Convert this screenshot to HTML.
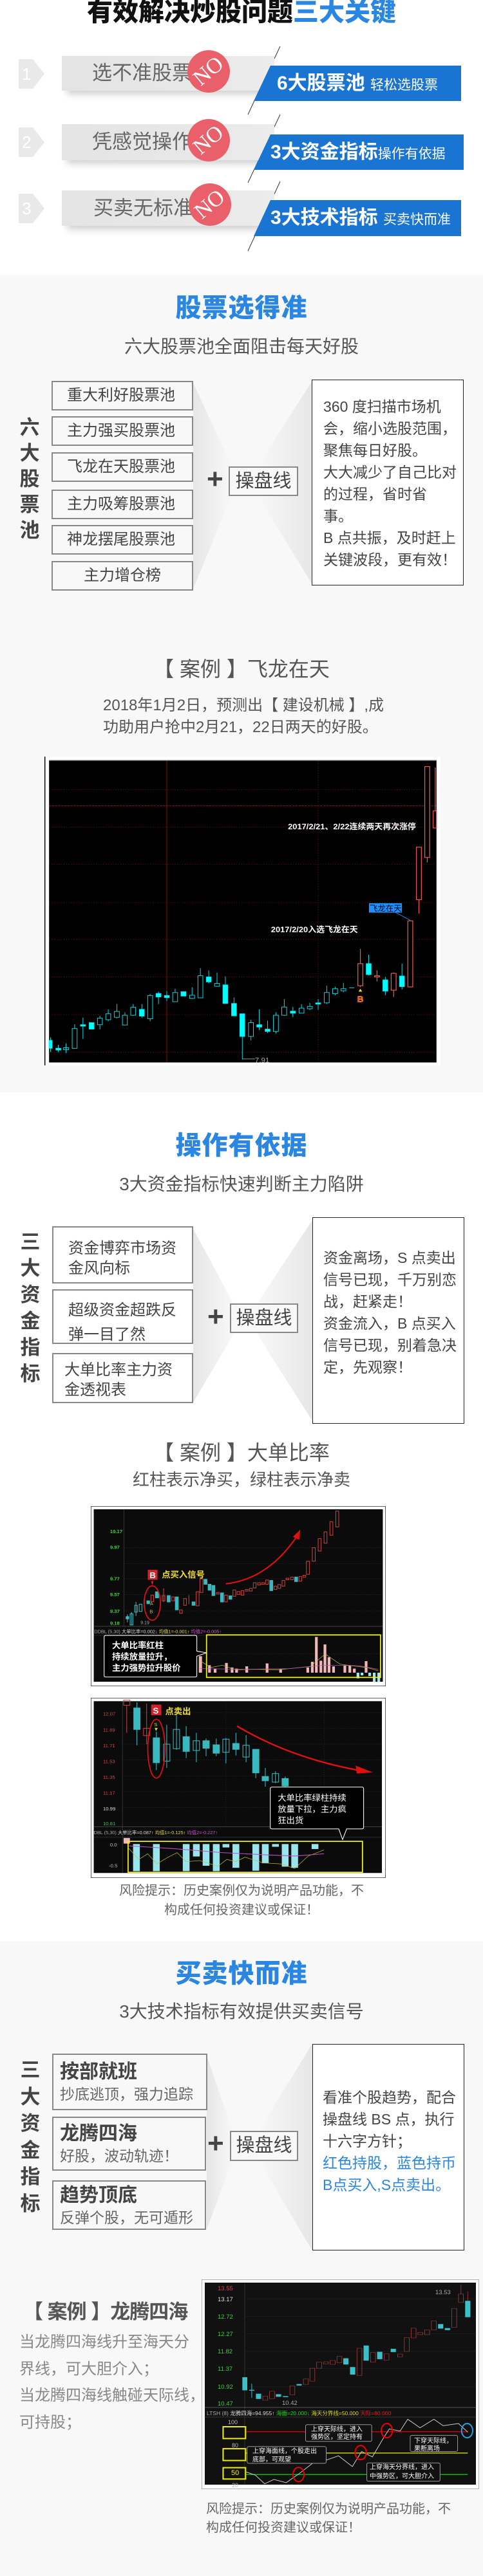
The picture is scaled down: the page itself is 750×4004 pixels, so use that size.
<!DOCTYPE html>
<html><head><meta charset="utf-8">
<style>
*{margin:0;padding:0;box-sizing:border-box}
body{width:750px;height:4004px;position:relative;background:#fff;font-family:"Liberation Sans","Noto Sans CJK SC",sans-serif;color:#555;overflow:hidden}
.a{position:absolute}
.c{text-align:center;left:0;width:750px;white-space:nowrap}
.t1{font-size:40px;font-weight:900;color:#2a86e0;letter-spacing:1px}
.sub{font-size:28px;color:#555}
.gbar{background:linear-gradient(90deg,#e4e4e4,#e8e8e8 70%,#ececec);box-shadow:0 14px 10px -8px rgba(0,0,0,.18)}
.gtx{font-size:31px;color:#666;line-height:54px}
.blue{background:#1a74d2;clip-path:polygon(26px 0,100% 0,100% 100%,0 100%);box-shadow:0 10px 10px -6px rgba(0,0,0,.2);color:#fff;font-size:30px;font-weight:bold;line-height:55px;padding-left:36px;white-space:nowrap}
.blue small{font-size:21px;font-weight:normal}
.no{width:66px;height:66px;border-radius:50%;background:#e9606a;color:#fff;font-family:"Liberation Serif",serif;font-size:34px;line-height:66px;text-align:center;transform:rotate(-40deg)}
.arr{width:40px;height:46px;background:#e9e9e9;clip-path:polygon(0 0,55% 0,100% 50%,55% 100%,0 100%);color:#fff;font-size:26px;line-height:46px;padding-left:5px}
.bx{border:2px solid #888;background:#f8f8f8;font-size:24px;color:#444}
.rb{border:1.5px solid #222;background:#fff;font-size:23px;color:#444;line-height:34px}
.vt{font-size:31px;color:#444;width:34px;text-align:center;line-height:40px;font-weight:bold}
.plus{font-size:44px;color:#444;font-weight:bold}
.cp{border:2px solid #888;background:#f8f8f8;font-size:29px;color:#444;text-align:center}
.case{font-size:32px;color:#555}
.risk{font-size:20px;color:#666}
</style></head><body>

<div class="a c" style="top:-4px;font-size:40px;font-weight:900;color:#111;line-height:46px">有效解决炒股问题<span style="color:#2a86e0">三大关键</span></div>

<svg class="a" style="left:0;top:0" width="750" height="420">
<line x1="435" y1="72" x2="385" y2="178" stroke="#333" stroke-width="1"/>
<line x1="435" y1="178" x2="385" y2="284" stroke="#333" stroke-width="1"/>
<line x1="435" y1="282" x2="385" y2="390" stroke="#333" stroke-width="1"/>
</svg>

<div class="a arr" style="left:29px;top:92px">1</div>
<div class="a arr" style="left:29px;top:198px">2</div>
<div class="a arr" style="left:29px;top:301px">3</div>

<div class="a gbar" style="left:96px;top:87px;width:330px;height:54px"></div>
<div class="a gbar" style="left:96px;top:193px;width:330px;height:56px"></div>
<div class="a gbar" style="left:96px;top:296px;width:330px;height:55px"></div>
<div class="a gtx" style="left:143px;top:87px">选不准股票</div>
<div class="a gtx" style="left:143px;top:194px">凭感觉操作</div>
<div class="a gtx" style="left:145px;top:297px">买卖无标准</div>

<div class="a blue" style="left:394px;top:102px;width:322px;height:55px">6大股票池 <small>轻松选股票</small></div>
<div class="a blue" style="left:394px;top:209px;width:326px;height:55px;padding-left:26px">3大资金指标<small>操作有依据</small></div>
<div class="a blue" style="left:394px;top:311px;width:322px;height:56px;padding-left:26px">3大技术指标 <small>买卖快而准</small></div>

<div class="a no" style="left:291px;top:78px">NO</div>
<div class="a no" style="left:291px;top:185px">NO</div>
<div class="a no" style="left:293px;top:285px">NO</div>

<div class="a" style="left:0;top:427px;width:750px;height:1271px;background:#f8f8f8"></div>
<div class="a c t1" style="top:452px;line-height:54px">股票选得准</div>
<div class="a c sub" style="top:521px;line-height:36px">六大股票池全面阻击每天好股</div>

<svg class="a" style="left:0;top:560px" width="750" height="380">
<defs><linearGradient id="fg" x1="0" x2="1"><stop offset="0" stop-color="#e6e6e6"/><stop offset="1" stop-color="#f8f8f8"/></linearGradient>
<linearGradient id="fg2" x1="1" x2="0"><stop offset="0" stop-color="#e6e6e6"/><stop offset="1" stop-color="#f8f8f8"/></linearGradient></defs>
<polygon points="300,35 360,165 360,210 300,355" fill="url(#fg)"/>
<polygon points="400,165 486,30 486,350 400,210" fill="url(#fg2)"/>
</svg>

<div class="a vt" style="left:29px;top:645px">六<br>大<br>股<br>票<br>池</div>
<div class="a bx" style="left:80px;top:592px;width:220px;height:46px;line-height:42px;padding-left:22px">重大利好股票池</div>
<div class="a bx" style="left:80px;top:647px;width:220px;height:46px;line-height:42px;padding-left:22px">主力强买股票池</div>
<div class="a bx" style="left:80px;top:703px;width:220px;height:46px;line-height:42px;padding-left:22px">飞龙在天股票池</div>
<div class="a bx" style="left:80px;top:761px;width:220px;height:46px;line-height:42px;padding-left:22px">主力吸筹股票池</div>
<div class="a bx" style="left:80px;top:816px;width:220px;height:46px;line-height:42px;padding-left:22px">神龙摆尾股票池</div>
<div class="a bx" style="left:80px;top:872px;width:220px;height:46px;line-height:42px;text-align:center">主力增仓榜</div>
<div class="a plus" style="left:321px;top:720px">+</div>
<div class="a cp" style="left:355px;top:725px;width:108px;height:46px;line-height:42px">操盘线</div>
<div class="a rb" style="left:484px;top:590px;width:236px;height:320px;padding:24px 0 0 17px">360 度扫描市场机<br>会，缩小选股范围，<br>聚焦每日好股。<br>大大减少了自己比对<br>的过程，省时省<br>事。<br>B 点共振，及时赶上<br>关键波段，更有效！</div>

<div class="a c case" style="top:1020px;line-height:40px">【 案例 】飞龙在天</div>
<div class="a" style="left:160px;top:1080px;font-size:24px;color:#555;line-height:34px;white-space:nowrap">2018年1月2日，预测出【 建设机械 】,成<br>功助用户抢中2月21，22日两天的好股。</div>

<svg class="a" style="left:69px;top:1176px" width="615" height="480" viewBox="145 383 1285 1047" preserveAspectRatio="none">
<rect x="145" y="383" width="1285" height="1047" fill="#fff"/>
<rect x="145" y="383" width="3" height="1047" fill="#000"/>
<rect x="160" y="395" width="1257" height="1025" fill="#000"/>
<rect x="160" y="395" width="1257" height="3" fill="#555"/>
<g stroke="#8a1010" stroke-width="2" stroke-dasharray="2 6">
<line x1="160" y1="495" x2="1417" y2="495"/><line x1="160" y1="622" x2="1417" y2="622"/><line x1="160" y1="748" x2="1417" y2="748"/><line x1="160" y1="878" x2="1417" y2="878"/><line x1="160" y1="1003" x2="1417" y2="1003"/><line x1="160" y1="1130" x2="1417" y2="1130"/><line x1="160" y1="1258" x2="1417" y2="1258"/><line x1="160" y1="1385" x2="1417" y2="1385"/><line x1="1033" y1="398" x2="1033" y2="1420"/></g>
<line x1="160" y1="550" x2="1417" y2="550" stroke="#c01010" stroke-width="2" stroke-dasharray="6 4"/>
<line x1="542" y1="398" x2="542" y2="1420" stroke="#8a1010" stroke-width="2"/>
<g stroke="#00e5ee" stroke-width="2" fill="#00ffff">
<line x1="165" y1="1335" x2="165" y2="1385"/><rect x="160" y="1345" width="10" height="27"/>
<line x1="190" y1="1360" x2="190" y2="1385"/><rect x="182" y="1372" width="16" height="6"/>
<line x1="215" y1="1355" x2="215" y2="1388"/><rect x="207" y="1370" width="16" height="7" fill="none"/>
<line x1="243" y1="1290" x2="243" y2="1372"/><rect x="235" y="1305" width="16" height="67" fill="#000"/>
<line x1="270" y1="1268" x2="270" y2="1340"/><rect x="262" y="1292" width="16" height="5"/>
<rect x="290" y="1285" width="16" height="22"/>
<line x1="325" y1="1262" x2="325" y2="1308"/><rect x="317" y="1270" width="16" height="22" fill="#000"/>
<line x1="352" y1="1240" x2="352" y2="1280"/><rect x="344" y="1255" width="16" height="20" fill="#000"/>
<line x1="380" y1="1222" x2="380" y2="1270"/><rect x="372" y="1247" width="16" height="20" fill="#000"/>
<line x1="406" y1="1250" x2="406" y2="1293"/><rect x="398" y="1260" width="16" height="33" fill="#000"/>
<line x1="433" y1="1222" x2="433" y2="1262"/><rect x="425" y="1233" width="16" height="27" fill="#000"/>
<line x1="461" y1="1222" x2="461" y2="1268"/><rect x="453" y="1240" width="16" height="23"/>
<line x1="488" y1="1188" x2="488" y2="1280"/><rect x="480" y="1193" width="16" height="79" fill="#000"/>
<line x1="515" y1="1180" x2="515" y2="1222"/><rect x="507" y="1186" width="16" height="12"/>
<line x1="542" y1="1178" x2="542" y2="1212"/><rect x="534" y="1193" width="16" height="7"/>
<line x1="569" y1="1170" x2="569" y2="1214"/><rect x="561" y="1183" width="16" height="31" fill="#000"/>
<rect x="588" y="1180" width="16" height="15"/>
<line x1="624" y1="1165" x2="624" y2="1205"/><rect x="616" y="1192" width="16" height="11" fill="#000"/>
<line x1="651" y1="1100" x2="651" y2="1201"/><rect x="643" y="1126" width="16" height="75" fill="#000"/>
<line x1="678" y1="1108" x2="678" y2="1152"/><rect x="670" y="1130" width="16" height="17"/>
<line x1="705" y1="1115" x2="705" y2="1162"/><rect x="697" y="1152" width="16" height="10" fill="#000"/>
<line x1="732" y1="1128" x2="732" y2="1220"/><rect x="724" y="1157" width="16" height="63"/>
<line x1="760" y1="1200" x2="760" y2="1262"/><rect x="752" y="1220" width="16" height="42"/>
<line x1="787" y1="1255" x2="787" y2="1410"/><rect x="779" y="1255" width="16" height="77"/>
<line x1="787" y1="1408" x2="828" y2="1408" stroke="#aaa"/>
<line x1="815" y1="1275" x2="815" y2="1345"/><rect x="807" y="1285" width="16" height="47" fill="#000"/>
<line x1="842" y1="1240" x2="842" y2="1310"/><rect x="834" y="1292" width="16" height="8"/>
<line x1="869" y1="1278" x2="869" y2="1320"/><rect x="861" y="1307" width="16" height="8"/>
<line x1="896" y1="1250" x2="896" y2="1322"/><rect x="888" y="1260" width="16" height="55" fill="#000"/>
<line x1="923" y1="1205" x2="923" y2="1262"/><rect x="915" y="1232" width="16" height="28" fill="#000"/>
<line x1="951" y1="1232" x2="951" y2="1266"/><rect x="943" y="1246" width="16" height="7"/>
<line x1="979" y1="1222" x2="979" y2="1253"/><rect x="971" y="1236" width="16" height="17" fill="#000"/>
<line x1="1006" y1="1218" x2="1006" y2="1242"/><rect x="998" y="1230" width="16" height="8" fill="#000"/>
<line x1="1033" y1="1205" x2="1033" y2="1242"/><rect x="1025" y="1218" width="16" height="4"/>
<line x1="1061" y1="1160" x2="1061" y2="1222"/><rect x="1053" y="1183" width="16" height="35" fill="#000"/>
<line x1="1088" y1="1163" x2="1088" y2="1192"/><rect x="1080" y="1170" width="16" height="17" fill="#000"/>
<line x1="1115" y1="1150" x2="1115" y2="1182"/><rect x="1107" y="1170" width="16" height="7" fill="#000"/>
<line x1="1134" y1="1167" x2="1150" y2="1167"/>
<line x1="1197" y1="1055" x2="1197" y2="1125"/><rect x="1189" y="1085" width="16" height="37"/>
<line x1="1251" y1="1130" x2="1251" y2="1192"/><rect x="1243" y="1140" width="16" height="38"/>
<line x1="1305" y1="1085" x2="1305" y2="1172"/><rect x="1297" y="1127" width="16" height="36"/>
</g>
<g stroke="#ff5555" stroke-width="2.5" fill="#000">
<line x1="1170" y1="1035" x2="1170" y2="1165"/><rect x="1162" y="1085" width="16" height="75"/>
<line x1="1224" y1="1108" x2="1224" y2="1145"/><rect x="1216" y="1126" width="16" height="4"/>
<line x1="1278" y1="1115" x2="1278" y2="1198"/><rect x="1270" y="1118" width="16" height="57"/>
<rect x="1324" y="940" width="16" height="224"/>
<line x1="1360" y1="868" x2="1360" y2="915"/><rect x="1352" y="690" width="16" height="178"/>
<line x1="1387" y1="725" x2="1387" y2="742"/><rect x="1379" y="417" width="16" height="308"/>
<line x1="1413" y1="420" x2="1413" y2="567"/><rect x="1406" y="567" width="11" height="58"/>
</g>
<line x1="1285" y1="912" x2="1332" y2="938" stroke="#1e90ff" stroke-width="2"/>
<rect x="1198" y="880" width="107" height="32" fill="#1e90ff"/>
<text x="1200" y="906" font-size="26" fill="#000">飞龙在天</text>
<text x="935" y="630" font-size="27" font-weight="bold" fill="#fff">2017/2/21、2/22连续两天再次涨停</text>
<text x="880" y="978" font-size="27" font-weight="bold" fill="#fff">2017/2/20入选飞龙在天</text>
<text x="828" y="1420" font-size="24" fill="#aaa">7.91</text>
<text x="1160" y="1215" font-size="28" font-weight="bold" fill="#ff3030" stroke="#ffd700" stroke-width="1">B</text>
<polygon points="1170,1170 1164,1180 1176,1180" fill="#ffd700"/>
</svg>

<div class="a c t1" style="top:1754px;line-height:54px">操作有依据</div>
<div class="a c sub" style="top:1823px;line-height:36px">3大资金指标快速判断主力陷阱</div>
<svg class="a" style="left:0;top:1880px" width="750" height="340">
<polygon points="300,30 362,145 362,195 300,300" fill="url(#fg)"/>
<polygon points="400,145 486,15 486,330 400,195" fill="url(#fg2)"/>
</svg>
<div class="a vt" style="left:30px;top:1910px;line-height:41px">三<br>大<br>资<br>金<br>指<br>标</div>
<div class="a bx" style="left:81px;top:1906px;width:219px;height:89px;padding:17px 0 0 23px;line-height:31px;background:#fff">资金博弈市场资<br>金风向标</div>
<div class="a bx" style="left:81px;top:2004px;width:219px;height:85px;padding:12px 0 0 23px;line-height:38px;background:#fff">超级资金超跌反<br>弹一目了然</div>
<div class="a bx" style="left:81px;top:2103px;width:219px;height:78px;padding:9px 0 0 17px;line-height:31px;background:#fff">大单比率主力资<br>金透视表</div>
<div class="a plus" style="left:322px;top:2022px">+</div>
<div class="a cp" style="left:357px;top:2026px;width:106px;height:46px;line-height:42px">操盘线</div>
<div class="a rb" style="left:485px;top:1892px;width:236px;height:321px;padding:45px 0 0 16px">资金离场，S 点卖出<br>信号已现，千万别恋<br>战，赶紧走！<br>资金流入，B 点买入<br>信号已现，别着急决<br>定，先观察！</div>
<div class="a c case" style="top:2238px;line-height:40px">【 案例 】大单比率</div>
<div class="a c" style="top:2284px;font-size:26px;color:#555;line-height:32px">红柱表示净买，绿柱表示净卖</div>

<svg class="a" style="left:141px;top:2341px" width="458" height="280" viewBox="118 -254 1305 797" preserveAspectRatio="none">
<rect x="118" y="-254" width="1305" height="797" fill="#fff" stroke="#222" stroke-width="4"/>
<rect x="131" y="-240" width="1279" height="763" fill="#0b0b0b"/>
<g stroke="#333" stroke-width="2" stroke-dasharray="3 6"><line x1="265" y1="-70" x2="1410" y2="-70"/><line x1="265" y1="0" x2="1410" y2="0"/><line x1="265" y1="67" x2="1410" y2="67"/><line x1="265" y1="137" x2="1410" y2="137"/><line x1="265" y1="210" x2="1410" y2="210"/><line x1="265" y1="400" x2="1410" y2="400"/></g>
<line x1="265" y1="-240" x2="265" y2="278" stroke="#444" stroke-width="2"/>
<line x1="131" y1="278" x2="1410" y2="278" stroke="#555" stroke-width="2"/>
<line x1="131" y1="318" x2="1410" y2="318" stroke="#333" stroke-width="2"/>
<g font-size="22" font-weight="bold" fill="#3cd13c"><text x="203" y="-135">10.17</text><text x="203" y="-65">9.97</text><text x="203" y="75">9.77</text><text x="203" y="145">9.57</text><text x="203" y="218">9.37</text><text x="203" y="271">9.18</text></g>
<g stroke="#3ab8c0" stroke-width="3" fill="#3ab8c0">
<line x1="280" y1="225" x2="280" y2="260"/><rect x="274" y="235" width="12" height="10"/>
<line x1="298" y1="215" x2="298" y2="272"/><rect x="292" y="222" width="12" height="50" fill="none"/>
<line x1="318" y1="170" x2="318" y2="232"/><rect x="312" y="185" width="12" height="30" fill="none"/>
<rect x="332" y="180" width="12" height="32" fill="none"/><line x1="355" y1="150" x2="355" y2="185"/>
<rect x="366" y="165" width="12" height="13"/><rect x="404" y="125" width="14" height="27"/>
<rect x="456" y="142" width="13" height="28"/><rect x="492" y="148" width="13" height="57"/>
<rect x="566" y="170" width="13" height="15"/><rect x="619" y="70" width="13" height="22"/>
<rect x="637" y="92" width="13" height="26"/><rect x="654" y="97" width="13" height="45"/>
<rect x="692" y="130" width="13" height="40"/><rect x="729" y="143" width="13" height="15"/>
<rect x="910" y="75" width="13" height="45"/><rect x="1020" y="60" width="13" height="20"/>
</g>
<g stroke="#c84040" stroke-width="3" fill="none">
<rect x="384" y="140" width="12" height="28"/><line x1="440" y1="110" x2="440" y2="170"/><rect x="434" y="142" width="12" height="23"/>
<rect x="476" y="148" width="12" height="17"/><rect x="511" y="205" width="12" height="15"/><rect x="529" y="155" width="12" height="30"/>
<line x1="552" y1="140" x2="552" y2="180"/><rect x="584" y="125" width="13" height="62"/><rect x="601" y="68" width="13" height="60"/>
<rect x="674" y="128" width="12" height="7"/><rect x="710" y="140" width="12" height="30"/><rect x="747" y="117" width="12" height="28"/>
<rect x="765" y="124" width="12" height="13"/><rect x="783" y="120" width="12" height="20"/><rect x="802" y="115" width="12" height="7"/>
<rect x="820" y="110" width="12" height="12"/><rect x="837" y="85" width="12" height="23"/><rect x="856" y="85" width="12" height="10"/>
<rect x="874" y="85" width="12" height="7"/><rect x="892" y="73" width="12" height="19"/><rect x="929" y="100" width="12" height="15"/>
<rect x="946" y="93" width="12" height="17"/><rect x="964" y="75" width="12" height="25"/><rect x="982" y="65" width="12" height="7"/>
<rect x="1002" y="60" width="12" height="12"/><rect x="1039" y="58" width="12" height="20"/><rect x="1057" y="52" width="12" height="8"/>
<rect x="1072" y="-10" width="13" height="58"/><rect x="1098" y="-70" width="13" height="60"/><rect x="1124" y="-110" width="13" height="55"/>
<rect x="1150" y="-140" width="13" height="50"/><rect x="1176" y="-185" width="13" height="60"/><rect x="1202" y="-232" width="13" height="70"/>
</g>
<path d="M715 90 Q900 70 1030 -120" stroke="#e01010" stroke-width="6" fill="none"/>
<polygon points="1045,-150 1012,-118 1040,-105" fill="#e01010"/>
<rect x="370" y="28" width="43" height="44" fill="#d4202a"/><text x="378" y="65" font-size="38" font-weight="bold" fill="#fff">B</text>
<text x="432" y="62" font-size="38" font-weight="bold" fill="#f0e020">点买入信号</text>
<polygon points="384,78 396,78 390,95" fill="#d4202a"/>
<ellipse cx="390" cy="175" rx="36" ry="76" fill="none" stroke="#e01010" stroke-width="5"/>
<text x="380" y="185" font-size="20" fill="#e0b040">A</text><text x="378" y="220" font-size="22" fill="#e0b040">B</text>
<text x="338" y="268" font-size="20" fill="#aaa">9.19</text>
<text x="133" y="308" font-size="21" fill="#aaa">DDBL (5,30)  <tspan fill="#ddd">大单比率=0.002↓</tspan>  <tspan fill="#e0e020">均值1=-0.001↑</tspan>  <tspan fill="#d050d0">均值2=-0.005↑</tspan></text>
<g fill="#f2b8b8">
<rect x="596" y="410" width="14" height="73"/><rect x="637" y="450" width="12" height="33"/><rect x="662" y="465" width="12" height="18"/><rect x="712" y="440" width="12" height="43"/><rect x="737" y="460" width="12" height="23"/><rect x="757" y="465" width="12" height="18"/><rect x="802" y="455" width="12" height="28"/><rect x="892" y="442" width="12" height="41"/><rect x="952" y="467" width="12" height="16"/><rect x="1072" y="460" width="12" height="23"/><rect x="1092" y="435" width="12" height="48"/><rect x="1110" y="325" width="12" height="158"/><rect x="1130" y="430" width="12" height="53"/><rect x="1148" y="358" width="12" height="125"/><rect x="1166" y="415" width="12" height="68"/><rect x="1186" y="455" width="12" height="28"/><rect x="1236" y="450" width="12" height="33"/><rect x="1258" y="450" width="12" height="33"/><rect x="1278" y="465" width="12" height="18"/><rect x="1330" y="432" width="12" height="51"/></g>
<g fill="#a0e8f0"><rect x="1294" y="483" width="12" height="25"/><rect x="1312" y="483" width="12" height="12"/><rect x="1346" y="483" width="12" height="15"/><rect x="1366" y="483" width="12" height="40"/><rect x="1386" y="483" width="12" height="40"/></g>
<polyline points="600,430 650,460 700,450 760,470 850,468 950,470 1090,455 1155,400 1220,445 1290,455 1340,460 1390,475" stroke="#c8c030" stroke-width="2" fill="none"/>
<polyline points="600,465 800,468 1000,465 1150,450 1300,452 1390,468" stroke="#c050c0" stroke-width="2" fill="none"/>
<rect x="630" y="316" width="770" height="188" fill="none" stroke="#f0f020" stroke-width="5"/>
<path d="M183 318 H580 Q587 318 587 326 V388 L630 395 L587 410 V495 Q587 502 580 502 H183 Q177 502 177 495 V326 Q177 318 183 318Z" fill="#000" stroke="#fff" stroke-width="3"/>
<g font-size="38" font-weight="bold" fill="#fff"><text x="212" y="375">大单比率红柱</text><text x="212" y="425">持续放量拉升，</text><text x="212" y="475">主力强势拉升股价</text></g>
</svg>

<svg class="a" style="left:141px;top:2639px" width="458" height="280" viewBox="118 595 1305 797" preserveAspectRatio="none">
<rect x="118" y="595" width="1305" height="797" fill="#fff" stroke="#222" stroke-width="4"/>
<rect x="131" y="610" width="1275" height="760" fill="#0b0b0b"/>
<g stroke="#333" stroke-width="2" stroke-dasharray="3 6"><line x1="258" y1="660" x2="1405" y2="660"/><line x1="258" y1="730" x2="1405" y2="730"/><line x1="258" y1="800" x2="1405" y2="800"/><line x1="258" y1="870" x2="1405" y2="870"/><line x1="258" y1="940" x2="1405" y2="940"/><line x1="258" y1="1010" x2="1405" y2="1010"/><line x1="258" y1="1080" x2="1405" y2="1080"/><line x1="715" y1="610" x2="715" y2="1160"/><line x1="1150" y1="610" x2="1150" y2="1160"/></g>
<line x1="258" y1="610" x2="258" y2="1370" stroke="#444" stroke-width="2"/>
<line x1="131" y1="1165" x2="1406" y2="1165" stroke="#555" stroke-width="2"/>
<line x1="131" y1="1212" x2="1406" y2="1212" stroke="#333" stroke-width="2"/>
<g font-size="22" fill="#e04040"><text x="172" y="673">12.07</text><text x="172" y="745">11.89</text><text x="172" y="814">11.71</text><text x="172" y="884">11.53</text><text x="172" y="954">11.35</text><text x="172" y="1024">11.17</text></g>
<text x="172" y="1093" font-size="22" fill="#ddd">10.99</text><text x="172" y="1158" font-size="22" fill="#3cd13c">10.81</text>
<g stroke="#3ab8c0" stroke-width="3" fill="#3ab8c0">
<line x1="322" y1="615" x2="322" y2="805"/><rect x="308" y="640" width="28" height="95"/>
<line x1="408" y1="745" x2="408" y2="915"/><rect x="394" y="772" width="28" height="110"/>
<line x1="454" y1="715" x2="454" y2="905"/><rect x="440" y="800" width="28" height="75" fill="none"/>
<line x1="497" y1="670" x2="497" y2="825"/><rect x="483" y="735" width="28" height="85" fill="none"/>
<line x1="540" y1="720" x2="540" y2="862"/><rect x="526" y="767" width="28" height="65"/>
<line x1="585" y1="750" x2="585" y2="880"/><rect x="571" y="785" width="28" height="43" fill="none"/>
<line x1="628" y1="775" x2="628" y2="853"/><rect x="614" y="785" width="28" height="33"/>
<line x1="673" y1="775" x2="673" y2="853"/><rect x="659" y="803" width="28" height="37"/>
<line x1="716" y1="773" x2="716" y2="885"/><rect x="702" y="778" width="28" height="58" fill="none"/>
<line x1="760" y1="750" x2="760" y2="850"/><rect x="746" y="797" width="28" height="26"/>
<line x1="805" y1="760" x2="805" y2="880"/><rect x="791" y="805" width="28" height="52" fill="none"/>
<line x1="848" y1="823" x2="848" y2="950"/><rect x="834" y="823" width="28" height="104"/>
<line x1="890" y1="905" x2="890" y2="988"/><rect x="876" y="943" width="28" height="19"/>
<line x1="935" y1="920" x2="935" y2="972"/><rect x="921" y="930" width="28" height="38" fill="none"/>
<line x1="978" y1="943" x2="978" y2="990"/><rect x="964" y="952" width="28" height="33"/>
</g>
<g stroke="#c84040" stroke-width="3" fill="none"><rect x="263" y="605" width="28" height="23"/><line x1="277" y1="628" x2="277" y2="750"/><rect x="351" y="730" width="28" height="32"/><line x1="365" y1="620" x2="365" y2="800"/></g>
<path d="M765 720 Q1000 860 1300 915" stroke="#e01010" stroke-width="7" fill="none"/>
<polygon points="1365,925 1290,895 1295,930" fill="#e01010"/>
<rect x="385" y="625" width="45" height="47" fill="#d4202a"/><text x="393" y="665" font-size="38" font-weight="bold" fill="#fff">S</text>
<text x="447" y="668" font-size="38" font-weight="bold" fill="#f0e020">点卖出</text>
<text x="398" y="720" font-size="22" fill="#c0e040">S</text><polygon points="400,728 414,728 407,742" fill="#c0e040"/>
<ellipse cx="408" cy="820" rx="38" ry="130" fill="none" stroke="#e01010" stroke-width="5"/>
<text x="131" y="1198" font-size="21" fill="#aaa">DBL (5,30)  <tspan fill="#ddd">大单比率=0.087↑</tspan>  <tspan fill="#e0e020">均值1=-0.125↑</tspan>  <tspan fill="#d050d0">均值2=-0.227↑</tspan></text>
<text x="203" y="1252" font-size="22" fill="#bbb">0.0</text><text x="198" y="1345" font-size="22" fill="#bbb">-0.5</text>
<g fill="#9ae4ee"><rect x="305" y="1242" width="30" height="120"/><rect x="393" y="1242" width="30" height="120"/><rect x="525" y="1242" width="30" height="120"/><rect x="570" y="1242" width="30" height="55"/><rect x="613" y="1242" width="30" height="96"/><rect x="658" y="1242" width="30" height="120"/><rect x="701" y="1242" width="30" height="15"/><rect x="745" y="1242" width="30" height="105"/><rect x="833" y="1242" width="30" height="118"/><rect x="875" y="1242" width="30" height="85"/><rect x="920" y="1242" width="30" height="12"/><rect x="963" y="1242" width="30" height="100"/><rect x="1005" y="1242" width="30" height="105"/><rect x="1095" y="1242" width="30" height="22"/></g>
<rect x="263" y="1215" width="28" height="25" fill="#f2b8b8"/>
<polyline points="285,1260 330,1310 370,1285 410,1330 460,1300 500,1280 540,1320 600,1315 680,1340 720,1310 760,1320 800,1300 880,1325 960,1330 1020,1350 1080,1295 1150,1268" stroke="#c8c030" stroke-width="2" fill="none"/>
<polyline points="285,1250 480,1262 700,1280 900,1290 1020,1295 1150,1285" stroke="#c050c0" stroke-width="3" fill="none"/>
<rect x="283" y="1230" width="1037" height="137" fill="none" stroke="#f0f020" stroke-width="5"/>
<path d="M920 990 H1318 Q1325 990 1325 998 V1168 Q1325 1175 1318 1175 H1250 L1232 1222 L1215 1175 H920 Q912 1175 912 1168 V998 Q912 990 920 990Z" fill="#000" stroke="#fff" stroke-width="3"/>
<g font-size="38" fill="#fff"><text x="945" y="1050">大单比率绿柱持续</text><text x="945" y="1100">放量下拉，主力疯</text><text x="945" y="1150">狂出货</text></g>
</svg>

<div class="a c risk" style="top:2924px;line-height:30px">风险提示：历史案例仅为说明产品功能，不<br>构成任何投资建议或保证！</div>

<div class="a" style="left:0;top:3017px;width:750px;height:987px;background:#f8f8f8"></div>
<div class="a c t1" style="top:3041px;line-height:54px">买卖快而准</div>
<div class="a c sub" style="top:3109px;line-height:36px">3大技术指标有效提供买卖信号</div>
<svg class="a" style="left:0;top:3170px" width="750" height="340">
<polygon points="321,25 362,145 362,185 321,295" fill="url(#fg)"/>
<polygon points="400,145 486,5 486,330 400,185" fill="url(#fg2)"/>
</svg>
<div class="a vt" style="left:30px;top:3197px;line-height:41.5px">三<br>大<br>资<br>金<br>指<br>标</div>
<div class="a bx" style="left:81px;top:3192px;width:241px;height:88px;padding:8px 0 0 10px"><div style="font-size:30px;font-weight:bold;line-height:38px;color:#444">按部就班</div><div style="font-size:23px;color:#666;line-height:30px">抄底逃顶，强力追踪</div></div>
<div class="a bx" style="left:81px;top:3290px;width:239px;height:84px;padding:6px 0 0 10px"><div style="font-size:30px;font-weight:bold;line-height:38px;color:#444">龙腾四海</div><div style="font-size:23px;color:#666;line-height:30px">好股，波动轨迹！</div></div>
<div class="a bx" style="left:81px;top:3389px;width:239px;height:77px;padding:3px 0 0 10px"><div style="font-size:30px;font-weight:bold;line-height:38px;color:#444">趋势顶底</div><div style="font-size:23px;color:#666;line-height:30px">反弹个股，无可遁形</div></div>
<div class="a plus" style="left:322px;top:3307px">+</div>
<div class="a cp" style="left:357px;top:3312px;width:106px;height:47px;line-height:43px">操盘线</div>
<div class="a rb" style="left:485px;top:3177px;width:236px;height:321px;padding:65px 0 0 15px">看准个股趋势，配合<br>操盘线 BS 点，执行<br>十六字方针；<br><span style="color:#2a86e0">红色持股，蓝色持币<br>B点买入,S点卖出。</span></div>

<div class="a" style="left:36px;top:3574px;font-size:31px;color:#555;line-height:40px;white-space:nowrap;letter-spacing:-1px;font-weight:bold">【 案例 】龙腾四海</div>
<div class="a" style="left:30px;top:3620px;font-size:24px;color:#888;line-height:41.7px;white-space:nowrap">当龙腾四海线升至海天分<br>界线，可大胆介入；<br>当龙腾四海线触碰天际线，<br>可持股；</div>

<svg class="a" style="left:313px;top:3543px" width="431" height="326" viewBox="0 0 431 326">
<rect x="0" y="0" width="431" height="326" fill="#fff" stroke="#999" stroke-width="1.5"/>
<rect x="5" y="5" width="421" height="314" fill="#111"/>
<svg x="0" y="0" width="431" height="326" viewBox="655 190 902 975" preserveAspectRatio="none">
<g stroke="#2a2a2a" stroke-width="1" vector-effect="non-scaling-stroke"><line x1="795" y1="280" x2="1547" y2="280"/><line x1="795" y1="362" x2="1547" y2="362"/><line x1="795" y1="443" x2="1547" y2="443"/><line x1="795" y1="525" x2="1547" y2="525"/><line x1="795" y1="605" x2="1547" y2="605"/><line x1="795" y1="688" x2="1547" y2="688"/></g>
<line x1="795" y1="210" x2="795" y2="1145" stroke="#333" stroke-width="1" vector-effect="non-scaling-stroke"/>
<line x1="665" y1="785" x2="1547" y2="785" stroke="#555" stroke-width="1" vector-effect="non-scaling-stroke"/>
<line x1="665" y1="830" x2="1547" y2="830" stroke="#333" stroke-width="1" vector-effect="non-scaling-stroke"/>
<g stroke="#3ac0c8" fill="#3ac0c8" stroke-width="1" vector-effect="non-scaling-stroke">
<rect x="788" y="645" width="15" height="60"/><line x1="818" y1="675" x2="818" y2="740" vector-effect="non-scaling-stroke"/><rect x="810" y="704" width="16" height="3"/><rect x="832" y="722" width="16" height="23"/><rect x="897" y="724" width="16" height="11"/><rect x="920" y="733" width="16" height="4"/><rect x="964" y="677" width="16" height="6"/><rect x="1116" y="557" width="16" height="28"/><rect x="1138" y="598" width="16" height="34"/><rect x="1182" y="498" width="16" height="69"/><rect x="1226" y="527" width="16" height="33"/><rect x="1270" y="513" width="16" height="14"/><rect x="1424" y="398" width="16" height="20"/><rect x="1446" y="417" width="16" height="8"/><rect x="1512" y="290" width="16" height="75"/></g>
<g stroke="#c04040" fill="none" stroke-width="1.5" vector-effect="non-scaling-stroke">
<rect x="854" y="732" width="16" height="20"/><rect x="876" y="710" width="16" height="35"/><rect x="942" y="685" width="16" height="42"/><rect x="986" y="653" width="16" height="25"/><rect x="1007" y="603" width="16" height="60"/><rect x="1029" y="575" width="16" height="28"/><rect x="1051" y="573" width="16" height="10"/><rect x="1073" y="567" width="16" height="18"/><rect x="1095" y="548" width="16" height="29"/><rect x="1160" y="510" width="16" height="127"/><rect x="1204" y="530" width="16" height="45"/><rect x="1248" y="535" width="16" height="30"/><rect x="1292" y="537" width="16" height="13"/><rect x="1314" y="460" width="16" height="65"/><rect x="1336" y="417" width="16" height="45"/><rect x="1358" y="437" width="16" height="10"/><rect x="1380" y="425" width="16" height="22"/><rect x="1402" y="383" width="16" height="42"/><rect x="1468" y="325" width="16" height="88"/><rect x="1490" y="258" width="16" height="39"/><line x1="1498" y1="215" x2="1498" y2="258"/><line x1="1520" y1="245" x2="1520" y2="290"/></g>
<line x1="800" y1="898" x2="1520" y2="898" stroke="#c00" stroke-width="1.5" vector-effect="non-scaling-stroke"/>
<line x1="800" y1="997" x2="1520" y2="997" stroke="#cc0" stroke-width="1.5" vector-effect="non-scaling-stroke"/>
<line x1="800" y1="1097" x2="1520" y2="1097" stroke="#0b0" stroke-width="1.5" vector-effect="non-scaling-stroke"/>
<polyline points="800,1085 830,1100 860,1140 890,1120 930,1135 970,1095 1020,1040 1060,1030 1100,1010 1145,1060 1175,990 1210,1015 1245,930 1265,885 1300,895 1325,840 1365,880 1410,840 1440,870 1490,860 1520,900" stroke="#ccc" fill="none" stroke-width="1" vector-effect="non-scaling-stroke"/>
<g fill="none" stroke-width="2"><rect x="725" y="875" width="73" height="55" stroke="#ee0" vector-effect="non-scaling-stroke"/><rect x="725" y="977" width="73" height="55" stroke="#ee0" vector-effect="non-scaling-stroke"/><rect x="725" y="1065" width="73" height="53" stroke="#ee0" vector-effect="non-scaling-stroke"/>
<ellipse cx="970" cy="1097" rx="18" ry="33" stroke="#e00" vector-effect="non-scaling-stroke"/><ellipse cx="1172" cy="995" rx="18" ry="33" stroke="#e00" vector-effect="non-scaling-stroke"/><ellipse cx="1257" cy="893" rx="18" ry="33" stroke="#e00" vector-effect="non-scaling-stroke"/><ellipse cx="1518" cy="893" rx="18" ry="33" stroke="#2aa0e0" vector-effect="non-scaling-stroke"/></g>
<g fill="#111" stroke="#999" stroke-width="1"><rect x="993" y="865" width="215" height="78" rx="6" vector-effect="non-scaling-stroke"/><rect x="803" y="967" width="257" height="78" rx="6" vector-effect="non-scaling-stroke"/><rect x="1192" y="1043" width="238" height="85" rx="6" vector-effect="non-scaling-stroke"/><rect x="1333" y="915" width="154" height="75" rx="6" vector-effect="non-scaling-stroke"/></g>
</svg>
<g font-size="9.5" fill="#3cd13c"><text x="25" y="17" fill="#e04040">13.55</text><text x="25" y="34" fill="#ddd">13.17</text><text x="25" y="61">12.72</text><text x="25" y="88">12.27</text><text x="25" y="115">11.82</text><text x="25" y="142">11.37</text><text x="25" y="170">10.92</text><text x="25" y="196">10.47</text></g>
<text x="363" y="23" font-size="9.5" fill="#aaa">13.53</text><text x="125" y="195" font-size="9.5" fill="#aaa">10.42</text>
<text x="8" y="211" font-size="8.5" fill="#aaa">LTSH (8)  <tspan fill="#ddd">龙腾四海=94.955↑</tspan>  <tspan fill="#2c2">海面=20.000↓</tspan>  <tspan fill="#dd2">海天分界线=50.000</tspan> <tspan fill="#d22">天际=80.000</tspan></text>
<g font-size="9" fill="#bbb"><text x="41" y="225">100</text><text x="47" y="261">80</text><text x="47" y="323">20</text></g>
<text x="46" y="304" font-size="11" fill="#ee0">50</text>
<g font-size="10" fill="#fff"><text x="170" y="236">上穿天际线，进入</text><text x="170" y="248">强势区，坚定持有</text><text x="79" y="270">上穿海面线，个股走出</text><text x="79" y="283">底部，可观望</text><text x="261" y="295">上穿海天分界线，进入</text><text x="261" y="309">中强势区，可大胆介入</text><text x="330" y="254">下穿天际线，</text><text x="330" y="266">果断离场</text></g>
</svg>

<div class="a risk" style="left:320px;top:3886px;line-height:29px;white-space:nowrap">风险提示：历史案例仅为说明产品功能，不<br>构成任何投资建议或保证！</div>

</body></html>
